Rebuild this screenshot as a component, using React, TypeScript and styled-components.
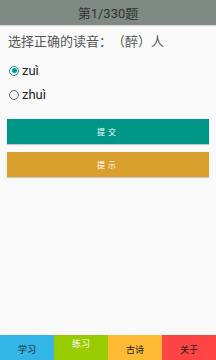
import React, { useState } from "react";
import styled, { createGlobalStyle } from "styled-components";

const GlobalStyle = createGlobalStyle`
  html, body { margin: 0; padding: 0; }
  body {
    width: 216px;
    height: 360px;
    overflow: hidden;
    background: #fafafa;
    font-family: Roboto, "Noto Sans CJK SC", sans-serif;
    text-spacing-trim: space-all;
  }
`;

const Screen = styled.div`
  width: 216px;
  height: 360px;
  display: flex;
  flex-direction: column;
  background: #fafafa;
`;

const Header = styled.div`
  height: 25px;
  background: #7e8a83;
  color: #333;
  font-size: 13px;
  display: flex;
  align-items: center;
  justify-content: center;
  box-shadow: 0 1px 1px rgba(0, 0, 0, 0.15);
`;

const Body = styled.div`
  flex: 1;
  padding: 8px 7px 0;
  display: flex;
  flex-direction: column;
`;

const Question = styled.div`
  font-size: 13px;
  color: #555;
  line-height: 18px;
  padding-left: 1px;
`;

const Options = styled.div`
  display: flex;
  flex-direction: column;
  gap: 5px;
  margin-top: 10px;
`;

const Option = styled.label`
  height: 19px;
  display: flex;
  align-items: center;
  gap: 3px;
  font-size: 13px;
  color: #222;
  padding-left: 2px;
`;

const Radio = styled.span<{ $on: boolean }>`
  width: 8px;
  height: 8px;
  border-radius: 50%;
  border: 1px solid ${(p) => (p.$on ? "#009688" : "#666")};
  display: flex;
  align-items: center;
  justify-content: center;
  &::after {
    content: "";
    width: 5px;
    height: 5px;
    border-radius: 50%;
    background: ${(p) => (p.$on ? "#009688" : "transparent")};
  }
`;

const Buttons = styled.div`
  display: flex;
  flex-direction: column;
  gap: 8px;
  margin-top: 15px;
`;

const Button = styled.button<{ $bg: string }>`
  height: 25px;
  border: none;
  background: ${(p) => p.$bg};
  color: #fff;
  font-size: 8px;
  letter-spacing: 3px;
  font-family: inherit;
  box-shadow: 0 1px 1px rgba(0, 0, 0, 0.2);
  padding: 0;
`;

const Nav = styled.div`
  height: 25px;
  display: grid;
  grid-template-columns: repeat(4, 1fr);
`;

const Tab = styled.div<{ $bg: string; $active?: boolean }>`
  background: ${(p) => p.$bg};
  color: ${(p) => (p.$active ? "#fff" : "#222")};
  font-size: 9px;
  display: flex;
  justify-content: center;
  align-items: ${(p) => (p.$active ? "flex-start" : "center")};
  padding-top: ${(p) => (p.$active ? "2px" : "3px")};
  box-sizing: border-box;
`;

const options = ["zuì", "zhuì"];

const tabs = [
  { label: "学习", bg: "#33b5e5" },
  { label: "练习", bg: "#99cc00", active: true },
  { label: "古诗", bg: "#ffbb33" },
  { label: "关于", bg: "#ff4444" },
];

export default function App() {
  const [sel, setSel] = useState(0);
  return (
    <Screen>
      <GlobalStyle />
      <Header>第1/330题</Header>
      <Body>
        <Question>选择正确的读音：（醉）人</Question>
        <Options>
          {options.map((o, i) => (
            <Option key={o} onClick={() => setSel(i)}>
              <Radio $on={sel === i} />
              {o}
            </Option>
          ))}
        </Options>
        <Buttons>
          <Button $bg="#009688">提交</Button>
          <Button $bg="#daa02e">提示</Button>
        </Buttons>
      </Body>
      <Nav>
        {tabs.map((t) => (
          <Tab key={t.label} $bg={t.bg} $active={t.active}>
            {t.label}
          </Tab>
        ))}
      </Nav>
    </Screen>
  );
}
